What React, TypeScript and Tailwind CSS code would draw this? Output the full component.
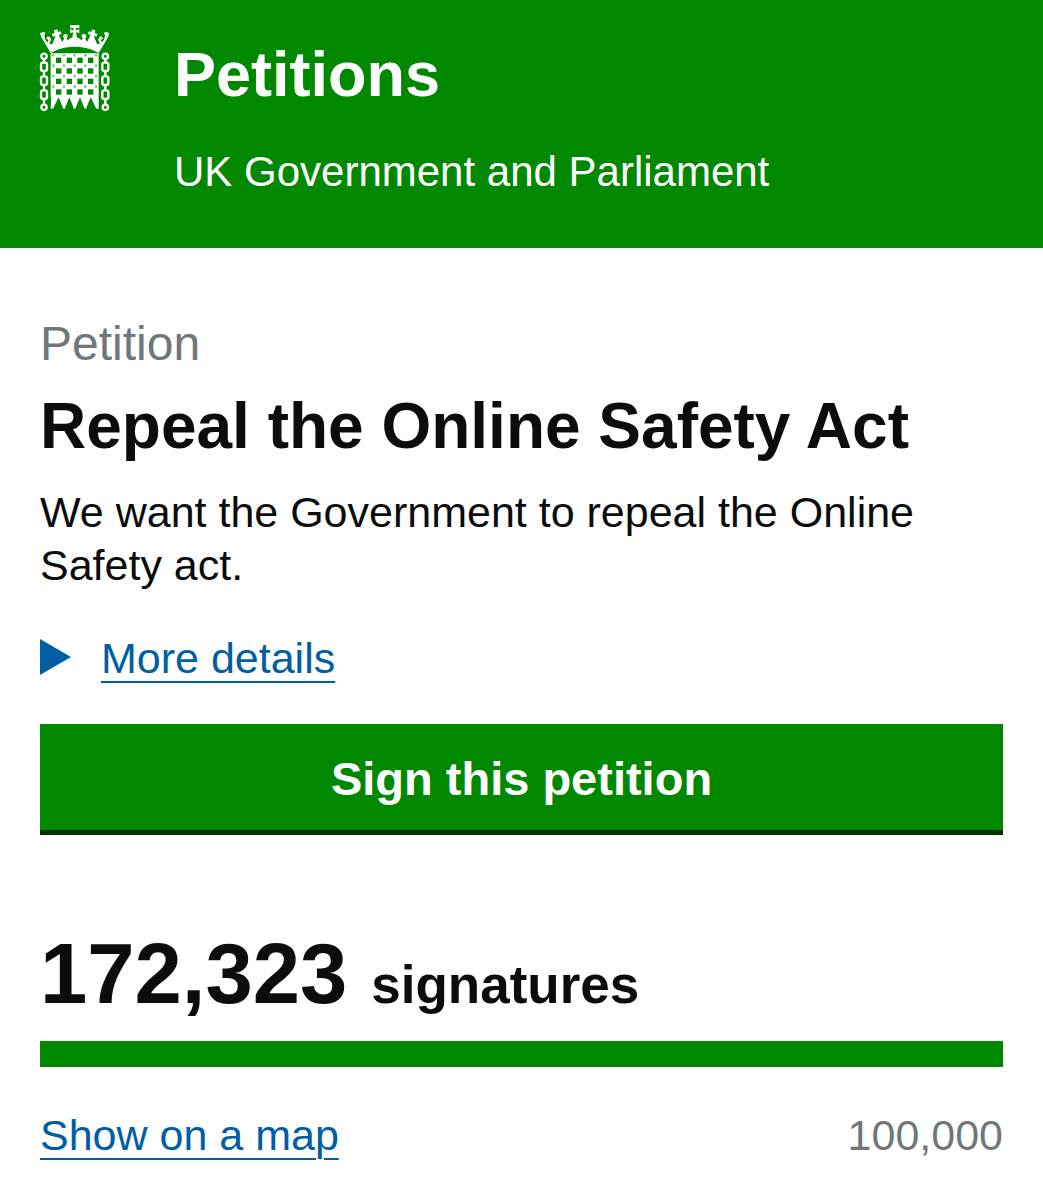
const columns = [86, 118, 150, 182];
const rows = [135, 167, 198, 230];
const rivetColumns = [70, 102, 134, 166, 198];
const rivetRows = [120, 151, 182, 214];

function Chain({ x }: { x: number }) {
  return (
    <g fill="none" stroke="currentColor" strokeWidth="7">
      <circle cx={x} cy="123" r="8" />
      <rect x={x - 9} y="142" width="18" height="25" rx="6" />
      <rect x={x - 9} y="183" width="18" height="26" rx="6" />
      <rect x={x - 9} y="225" width="18" height="26" rx="6" />
      <circle cx={x} cy="276" r="8" />
      <path d={`M${x} 131v11M${x} 167v16M${x} 209v16M${x} 251v17`} />
    </g>
  );
}

function CrownHalf() {
  return (
    <>
      {/* Outer arm and band */}
      <path d="M62 113L34 66l-4-12 9-4 7 2-3 9 3 12 8 10 11 4 12-3 16-5 10-2 12-4 8-6h12v27c-30 0-54 7-73 19z" />
      {/* Side cross */}
      <path d="M66 88l11-27-8 3-4-8 9-3-2-8 10-3 2 8 8-2 3 9-9 1 12 24z" />
      {/* Leaves */}
      <path d="M52 82l4-8-7-4 4-7 7 2 3 8-5 12zM98 78l5-9-5-5 4-7 8-1 4 6-4 6 3 9z" />
      {/* Centre cross */}
      <path d="M135 29h-15v10l10-2 1 8-11-3v11l10-2-4 21h9z" />
    </>
  );
}

function Portcullis() {
  return (
    <svg viewBox="30 26 210 258" className="w-[70px] h-[86px] overflow-visible text-white" fill="currentColor" aria-hidden="true">
      {/* Crown */}
      <CrownHalf />
      <g transform="matrix(-1 0 0 1 268 0)">
        <CrownHalf />
      </g>
      {/* Grille */}
      <path d="M62 114H206V280L199 280L182 246L168 280H164L150 246L136 280H132L118 246L104 280H100L86 246L69 280H62L64 246H62Z" />
      <g fill="#008800">
        {rows.map((y) => columns.map((x) => <rect key={`${x}-${y}`} x={x - 8} y={y - 8} width="16" height="16" />))}
      </g>
      <g fill="#7fc37f">
        {rivetRows.map((y) => rivetColumns.map((x) => <circle key={`${x}-${y}`} cx={x} cy={y} r="4" />))}
      </g>
      <Chain x={42} />
      <Chain x={226} />
    </svg>
  );
}

export default function App() {
  const signatures = 172323;
  const target = 100000;
  const progress = Math.min(100, (signatures / target) * 100);

  return (
    <div className="bg-white text-[#0b0c0c] font-['Liberation_Sans',Arial,sans-serif]">
      <header className="bg-[#008800] text-white flex items-start gap-16 px-10 pt-6 pb-11">
        <Portcullis />
        <div>
          <a href="#" className="block font-bold text-[63px] leading-[100px]">
            Petitions
          </a>
          <p className="mt-4 text-[42px] leading-[64px]">UK Government and Parliament</p>
        </div>
      </header>

      <main className="px-10 pt-16">
        <h1>
          <span className="block text-[48px] leading-[64px] text-[#6f777b]">Petition</span>
          <span className="block font-bold text-[64px] leading-[100px]">Repeal the Online Safety Act</span>
        </h1>
        <p className="mt-[10px] text-[43px] leading-[53px]">We want the Government to repeal the Online Safety act.</p>

        <details className="mt-10">
          <summary className="flex items-start text-[#005ea5] text-[43px] leading-[53px] cursor-pointer">
            <svg viewBox="0 0 31 36" className="w-[31px] h-9 mt-[7px] mr-[30px]" fill="currentColor" aria-hidden="true">
              <path d="M0 0l31 18L0 36z" />
            </svg>
            <span className="underline decoration-2 underline-offset-8">More details</span>
          </summary>
        </details>

        <button type="button" className="block w-full mt-[39px] pt-1 bg-[#008800] border-b-[5px] border-[#003300] text-white font-bold text-[47px] leading-[102px]">
          Sign this petition
        </button>

        <p className="flex items-baseline gap-6 mt-[86px] font-bold text-[53px] leading-[106px]">
          <span className="text-[85px]">{signatures.toLocaleString("en-GB")}</span> signatures
        </p>
        <div className="h-[26px] mt-[3px] bg-gray-200">
          <div className="h-full bg-[#008800]" style={{ width: `${progress}%` }} />
        </div>

        <div className="flex justify-between items-center mt-[42px] text-[43px] leading-[53px]">
          <a href="#" className="text-[#005ea5] underline decoration-2 underline-offset-8">
            Show on a map
          </a>
          <span className="text-[#6f777b]">{target.toLocaleString("en-GB")}</span>
        </div>
      </main>
    </div>
  );
}
